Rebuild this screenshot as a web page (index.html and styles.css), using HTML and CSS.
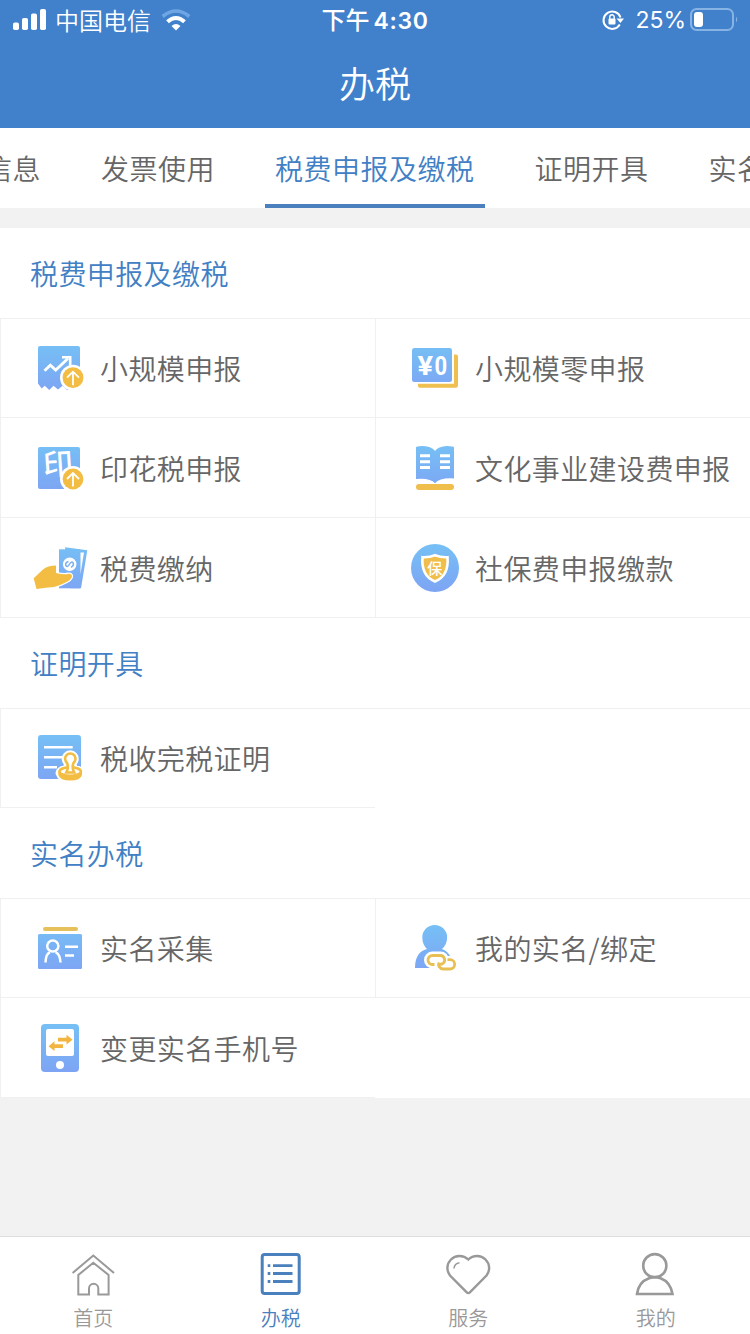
FILE: index.html
```html
<!DOCTYPE html>
<html lang="zh-CN">
<head>
    <meta charset="UTF-8">
    <meta name="viewport" content="width=device-width, initial-scale=1.0">
    <title>办税</title>
    <link rel="stylesheet" href="styles.css">
</head>
<body>
    <!-- Shared gradient and badge for the menu icons -->
    <svg class="defs" width="0" height="0">
        <defs>
            <linearGradient id="blue" gradientUnits="userSpaceOnUse" x1="0" y1="8" x2="0" y2="52">
                <stop offset="0" stop-color="#76bff5"/>
                <stop offset="1" stop-color="#7da5f4"/>
            </linearGradient>
            <g id="badge">
                <circle r="13" fill="#fff"/>
                <circle r="10.4" fill="#f2bd42"/>
                <path d="M0 7.500V-5.5M-6 0L0 -6L6 0" fill="none" stroke="#fff" stroke-width="1.8"/>
            </g>
        </defs>
    </svg>

    <header class="header">
        <div class="status-bar">
            <div class="status-left">
                <svg class="signal" width="34" height="22" viewBox="0 0 34 22" fill="#fff">
                    <rect x="0" y="13.5" width="6" height="7.5" rx="1.8"/>
                    <rect x="9" y="9" width="6" height="12" rx="1.8"/>
                    <rect x="18" y="4.5" width="6" height="16.5" rx="1.8"/>
                    <rect x="27" y="0" width="6" height="21" rx="1.8"/>
                </svg>
                <span class="carrier">中国电信</span>
                <svg class="wifi" width="30" height="22" viewBox="0 0 30 22">
                    <path d="M1.700 7.500Q15 -3.500 28.300 7.500" fill="none" stroke="#6fa5e2" stroke-width="3.600"/>
                    <path d="M6.500 12.800Q15 5.200 23.500 12.800" fill="none" stroke="#fff" stroke-width="4"/>
                    <path d="M10.500 17Q15 13 19.500 17L15 21.500Z" fill="#fff"/>
                </svg>
            </div>
            <div class="status-time">下午<span class="clock">4:30</span></div>
            <div class="status-right">
                <svg width="22" height="22" viewBox="0 0 22 22">
                    <path d="M17.800 15.500A8.700 8.700 0 1 1 18.500 8.500" fill="none" stroke="#fff" stroke-width="2"/>
                    <path d="M14.500 9.500H22L18.400 14Z" fill="#fff"/>
                    <rect x="6.500" y="9.500" width="7" height="6" rx="1" fill="#fff"/>
                    <path d="M7.800 10V8a2.200 2.200 0 0 1 4.400 0v2" fill="none" stroke="#fff" stroke-width="1.400"/>
                </svg>
                <span class="percent">25%</span>
                <svg width="49" height="24" viewBox="0 0 49 24">
                    <rect x="1" y="1" width="42" height="21" rx="5.500" fill="none" stroke="#86b2e4" stroke-width="2"/>
                    <rect x="4" y="4" width="9" height="15" rx="3" fill="#fff"/>
                    <path d="M46 8.500Q48.500 11.500 46 14.500Z" fill="#86b2e4"/>
                </svg>
            </div>
        </div>
        <h1 class="title">办税</h1>
    </header>

    <nav class="tabs">
        <a class="tab">信息</a>
        <a class="tab">发票使用</a>
        <a class="tab active">税费申报及缴税</a>
        <a class="tab">证明开具</a>
        <a class="tab">实名</a>
    </nav>

    <main class="content">
        <section>
            <h2 class="section-title">税费申报及缴税</h2>
            <div class="menu">
                <a class="item">
                    <svg class="icon" viewBox="0 0 60 60">
                        <path d="M10 8H48a2 2 0 0 1 2 2V51L37 52L32.500 47.700L28 51.500L23.500 47.700L19.300 52L14.700 47.700L11.700 50.500L8 45.500V10a2 2 0 0 1 2-2Z" fill="url(#blue)"/>
                        <path d="M14.500 32.700L20.300 27.200L25.700 32L38 20.500" fill="none" stroke="#fff" stroke-width="2.800"/>
                        <path d="M32 19.300H40.200V28" fill="none" stroke="#fff" stroke-width="2.600"/>
                        <use href="#badge" x="43" y="39.700"/>
                    </svg>
                    <span>小规模申报</span>
                </a>
                <a class="item">
                    <svg class="icon" viewBox="0 0 60 60">
                        <path d="M49 16.500h2a2 2 0 0 1 2 2V47.500a2.300 2.300 0 0 1-2.300 2.300H15a2 2 0 0 1-2-2V45.800H49Z" fill="#efbf4f"/>
                        <rect x="7" y="10" width="40" height="34" rx="2.500" fill="url(#blue)"/>
                        <text class="icon-yen" x="12.500" y="36.500" textLength="16" lengthAdjust="spacingAndGlyphs">¥</text>
                        <text class="icon-yen" x="29.500" y="36.500" textLength="13" lengthAdjust="spacingAndGlyphs">0</text>
                    </svg>
                    <span>小规模零申报</span>
                </a>
                <a class="item">
                    <svg class="icon" viewBox="0 0 60 60">
                        <rect x="8" y="9" width="42" height="42" rx="2" fill="url(#blue)"/>
                        <text class="icon-seal" x="13" y="37" transform="rotate(-4 28 28)">印</text>
                        <use href="#badge" x="43" y="41"/>
                    </svg>
                    <span>印花税申报</span>
                </a>
                <a class="item">
                    <svg class="icon" viewBox="0 0 60 60">
                        <path d="M11 9Q13 8 18 8Q27 8.500 30 13Q33 8.500 42 8Q49 8 49 9.500V40.500Q35 39.500 30 45.300Q25 39.500 11 41Z" fill="url(#blue)"/>
                        <path d="M15 17.700H25M15 23.700H25M15 29.500H25M35 17.700H45M35 23.700H45M35 29.500H45" stroke="#fff" stroke-width="3"/>
                        <rect x="11" y="46" width="38" height="6" rx="3" fill="#f0be4b"/>
                    </svg>
                    <span>文化事业建设费申报</span>
                </a>
                <a class="item">
                    <svg class="icon" viewBox="0 0 60 60">
                        <path d="M35 9.300L57.300 12.300L51 50.300H40Z" fill="url(#blue)"/>
                        <path d="M50.500 14.500H54L50.500 36Z" fill="#fff"/>
                        <rect x="29" y="11.300" width="21" height="39" fill="url(#blue)"/>
                        <circle cx="39.700" cy="26.300" r="6.700" fill="#fff"/>
                        <path d="M38.500 23.500Q35 24.500 35.800 27.500Q37.500 29.800 39.300 26.500Q41.500 22.500 43.300 25.200Q44 28.200 41 29.200" fill="none" stroke="#7eaff3" stroke-width="1.500"/>
                        <path d="M3.700 40.300L12.700 31.700Q18 27.500 26 27.500V35Q34 37 38.500 35.700Q43 35.700 41.700 39.500Q40 44 24 49Q16 49.500 6.500 51Z" fill="#f2bd42" stroke="#fff" stroke-width="2.400" paint-order="stroke"/>
                    </svg>
                    <span>税费缴纳</span>
                </a>
                <a class="item">
                    <svg class="icon" viewBox="0 0 60 60">
                        <circle cx="30" cy="30" r="24" fill="url(#blue)"/>
                        <path d="M30 17.200Q35.500 19.500 42.500 19.200Q44 38 30 43.500Q16 38 17.500 19.200Q24.500 19.500 30 17.200Z" fill="#f0be4b" stroke="#fff" stroke-width="2.600"/>
                        <text class="icon-bao" x="30" y="35.500">保</text>
                    </svg>
                    <span>社保费申报缴款</span>
                </a>
            </div>
        </section>

        <section>
            <h2 class="section-title">证明开具</h2>
            <div class="menu">
                <a class="item">
                    <svg class="icon" viewBox="0 0 60 60">
                        <rect x="8" y="7" width="43" height="44" rx="3" fill="url(#blue)"/>
                        <path d="M14 19.300H42.700M14 29.300H32M14 39.300H27" stroke="#fff" stroke-width="2.600"/>
                        <path d="M37.500 35A5 5 0 1 1 43 35L44 40Q52 42 51.500 45Q49 51.500 40 51.500Q31 51.500 29 45Q29 42 36.500 40Z" fill="#fff" stroke="#fff" stroke-width="7"/>
                        <path d="M28.300 43.500V47Q30 52.500 40.200 52.500Q50.500 52.500 52 47V43.500Z" fill="#f2bd42"/>
                        <ellipse cx="40.200" cy="43.500" rx="10.700" ry="4.300" fill="#fff" stroke="#f2bd42" stroke-width="2.600"/>
                        <path d="M36.300 44.500Q39 39.500 37 34.700A5.200 5.200 0 1 1 43.600 34.700Q41.500 39.500 44.200 44.500Z" fill="#fff" stroke="#f2bd42" stroke-width="2.600"/>
                    </svg>
                    <span>税收完税证明</span>
                </a>
            </div>
        </section>

        <section>
            <h2 class="section-title">实名办税</h2>
            <div class="menu">
                <a class="item">
                    <svg class="icon" viewBox="0 0 60 60">
                        <rect x="13" y="9" width="35" height="4" rx="2" fill="#e6c05b"/>
                        <rect x="8" y="16" width="44" height="35" rx="1.500" fill="url(#blue)"/>
                        <g fill="none" stroke="#fff" stroke-width="2.500">
                            <circle cx="22.800" cy="28" r="5.600"/>
                            <path d="M15.500 44.500Q15.800 36 20 34.200M25.500 34.200Q30 36 30.500 44.500"/>
                            <path d="M35 28.700H48M35 37.400H44"/>
                        </g>
                    </svg>
                    <span>实名采集</span>
                </a>
                <a class="item">
                    <svg class="icon" viewBox="0 0 60 60">
                        <path d="M10 50Q10 34 22 31Q17.300 26.500 17.300 19.300A12.400 12.400 0 1 1 42.100 19.300Q42.100 26.500 37 31Q42.500 33 45 38L30 50Z" fill="url(#blue)"/>
                        <!-- white outline under the chain -->
                        <g fill="#fff" stroke="#fff" stroke-width="8">
                            <rect x="23" y="37.500" width="17" height="9" rx="4.500"/>
                            <rect x="33.500" y="42" width="16" height="9" rx="4.500"/>
                        </g>
                        <g fill="none" stroke="#e8bf52" stroke-width="2.800">
                            <path d="M29.500 46.500H27.500A4.500 4.500 0 0 1 27.500 37.500H35.500A4.500 4.500 0 0 1 38.500 45Q37 46.500 34 46.500"/>
                            <path d="M42.500 41.700H45A4.600 4.600 0 0 1 45 51H38A4.500 4.500 0 0 1 34 44.500"/>
                        </g>
                    </svg>
                    <span>我的实名/绑定</span>
                </a>
                <a class="item">
                    <svg class="icon" viewBox="0 0 60 60">
                        <rect x="11" y="6" width="38" height="48" rx="4" fill="url(#blue)"/>
                        <rect x="16" y="11" width="28" height="27" rx="2" fill="#fff"/>
                        <circle cx="30" cy="47" r="4" fill="#fff"/>
                        <path d="M28 19.800H36.500V16.800L42.500 21.700L36.500 26.500V23.600H28ZM33 26.300H24.500V23.300L18.500 28.200L24.500 33V30.100H33Z" fill="#f2b640"/>
                    </svg>
                    <span>变更实名手机号</span>
                </a>
            </div>
        </section>
    </main>

    <footer class="tab-bar">
        <a class="bar-item">
            <svg viewBox="0 0 48 48">
                <path d="M2.600 22L23.300 4.500L44 22" stroke-width="2"/>
                <path d="M19 43.400H8.300V24L23.300 11.700L38.600 24V43.400H28.300V37.500A4.650 4.650 0 0 0 19 37.500Z" stroke-width="2"/>
            </svg>
            <span>首页</span>
        </a>
        <a class="bar-item current">
            <svg viewBox="0 0 48 48">
                <rect x="5.200" y="3.500" width="37" height="39" rx="2.500" stroke-width="3"/>
                <path d="M16 14.700H35.500M16 22.500H35.500M16 30.500H35.500M10.700 14.700H13.300M10.700 22.500H13.300M10.700 30.500H13.300" stroke-width="2.800"/>
            </svg>
            <span>办税</span>
        </a>
        <a class="bar-item">
            <svg viewBox="0 0 48 48">
                <path d="M23.300 8.500C18 3.500 10.500 4 6 8.500C1.500 13 1.300 19.500 5 24.500L21.500 41.200Q23.300 43 25.100 41.200L41.500 24.500C45.300 19.500 45 13 40.500 8.500C36 4 28.500 3.500 23.300 8.500Z" stroke-width="2.400"/>
                <path d="M9 17.500Q9.500 12.500 14.500 11.800" stroke-width="1.500"/>
            </svg>
            <span>服务</span>
        </a>
        <a class="bar-item">
            <svg viewBox="0 0 48 48">
                <circle cx="22.800" cy="14.700" r="11.600" stroke-width="2.600"/>
                <path d="M5 43Q6.500 31 17 27.200Q22.800 25 28.600 27.200Q38.500 31 40.500 43Z" stroke-width="2.600"/>
            </svg>
            <span>我的</span>
        </a>
    </footer>
</body>
</html>
```

FILE: styles.css
```css
* {
    margin: 0;
    padding: 0;
    box-sizing: border-box;
}

body {
    display: flex;
    flex-direction: column;
    height: 1334px;
    background: #f2f2f2;
    color: #666;
    font-family: "Noto Sans CJK SC", sans-serif;
    font-weight: 350;
    overflow: hidden;
}

svg {
    display: block;
    flex-shrink: 0;
}

.defs {
    position: absolute;
}

/* Header */
.header {
    height: 128px;
    background: #4180cb;
    color: #fff;
}

.status-bar {
    display: grid;
    grid-template-columns: 1fr auto 1fr;
    align-items: center;
    height: 40px;
    padding: 0 11px 0 13px;
    font-size: 24px;
    line-height: 38px;
}

.status-left,
.status-right {
    display: flex;
    align-items: center;
}

.carrier {
    margin: 0 10px 0 8px;
}

.status-time {
    margin-left: -2px;
    font-weight: 500;
}

.clock {
    margin-left: 4px;
    font-family: Inter, sans-serif;
    font-size: 23px;
    font-weight: 600;
    letter-spacing: 0.6px;
}

.status-right {
    justify-content: flex-end;
}

.percent {
    margin: 0 4px 0 11px;
    font-family: Inter, sans-serif;
    font-size: 23px;
    font-weight: 400;
}

.title {
    font-size: 36px;
    font-weight: 350;
    line-height: 84px;
    text-align: center;
}

/* Top tabs */
.tabs {
    display: flex;
    gap: 40px;
    height: 80px;
    padding-left: 0;
    text-indent: 0;
    background: #fff;
    overflow: hidden;
}

.tab {
    flex-shrink: 0;
    padding: 0 10px;
    border-bottom: 4px solid transparent;
    font-size: 28px;
    letter-spacing: 0.5px;
    line-height: 80px;
}

.tab:first-child {
    margin-left: -26px;
}

.tab.active {
    border-color: #4a80bd;
    color: #4180c4;
}

/* Menu sections */
.content {
    margin-top: 20px;
}

.section-title {
    height: 90px;
    padding-left: 30px;
    background: #fff;
    color: #4180c4;
    font-size: 28px;
    font-weight: 350;
    letter-spacing: 0.4px;
    line-height: 90px;
}

.menu {
    display: grid;
    grid-template-columns: 1fr 1fr;
    background: linear-gradient(#f0f0f0, #f0f0f0) top / 100% 1px no-repeat #fff;
}

.item {
    display: flex;
    align-items: center;
    gap: 10px;
    height: 100px;
    padding-left: 29px;
    border-left: 1px solid #f0f0f0;
    border-bottom: 1px solid #f0f0f0;
    font-size: 28px;
    letter-spacing: 0.4px;
    white-space: nowrap;
}

.icon {
    width: 60px;
    height: 60px;
}

.icon-yen {
    fill: #fff;
    font-family: Roboto, sans-serif;
    font-size: 26px;
    font-weight: 700;
}

.icon-seal {
    fill: #fff;
    font-size: 30px;
    font-weight: 500;
}

.icon-bao {
    fill: #fff;
    font-size: 15px;
    font-weight: 500;
    text-anchor: middle;
}

/* Bottom bar */
.tab-bar {
    display: flex;
    height: 98px;
    margin-top: auto;
    border-top: 1px solid #dedede;
    background: #fff;
}

.bar-item {
    flex: 1;
    display: flex;
    flex-direction: column;
    align-items: center;
    padding-top: 14px;
    color: #999;
    font-size: 20px;
    line-height: 40px;
}

.bar-item svg {
    width: 48px;
    height: 48px;
    fill: none;
    stroke: currentColor;
}

.bar-item span {
    margin: -1px 1px 0 0;
}

.bar-item.current {
    color: #4a80bd;
}
```
